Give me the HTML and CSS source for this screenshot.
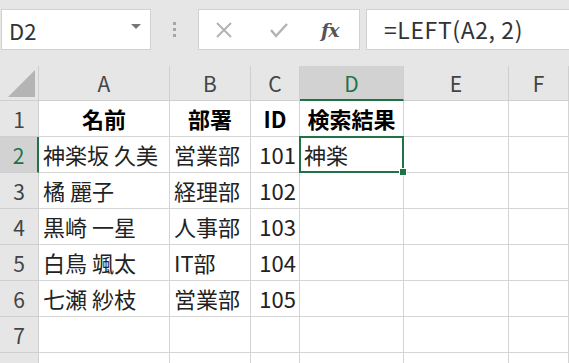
FILE: index.html
```html
<!DOCTYPE html>
<html lang="ja">
<head>
  <meta charset="UTF-8">
  <title>LEFT関数</title>
  <link rel="stylesheet" href="styles.css">
</head>
<body>
  <div class="toolbar">
    <div class="namebox">
      <span>D2</span>
      <span class="arrow"></span>
    </div>
    <div class="dots"><i></i><i></i><i></i></div>
    <div class="fbtns">
      <svg width="18" height="18" viewBox="0 0 18 18"><path d="M2 2 L16 16 M16 2 L2 16" stroke="#b3b3b3" stroke-width="2" fill="none"/></svg>
      <svg width="20" height="18" viewBox="0 0 20 18"><path d="M2 9 L7 15 L18 3" stroke="#b3b3b3" stroke-width="2.4" fill="none"/></svg>
      <span class="fx">fx</span>
    </div>
    <div class="formula">=LEFT(A2, 2)</div>
  </div>

  <div class="sheet">
    <div class="corner"><span class="tri"></span></div>
    <div class="hd">A</div>
    <div class="hd">B</div>
    <div class="hd">C</div>
    <div class="hd sel">D</div>
    <div class="hd">E</div>
    <div class="hd">F</div>

    <div class="rh">1</div>
    <div class="c b ctr">名前</div>
    <div class="c b ctr">部署</div>
    <div class="c b ctr">ID</div>
    <div class="c b ctr">検索結果</div>
    <div class="c"></div>
    <div class="c"></div>

    <div class="rh sel">2</div>
    <div class="c">神楽坂 久美</div>
    <div class="c">営業部</div>
    <div class="c num">101</div>
    <div class="c active">神楽</div>
    <div class="c"></div>
    <div class="c"></div>

    <div class="rh">3</div>
    <div class="c">橘 麗子</div>
    <div class="c">経理部</div>
    <div class="c num">102</div>
    <div class="c"></div>
    <div class="c"></div>
    <div class="c"></div>

    <div class="rh">4</div>
    <div class="c">黒崎 一星</div>
    <div class="c">人事部</div>
    <div class="c num">103</div>
    <div class="c"></div>
    <div class="c"></div>
    <div class="c"></div>

    <div class="rh">5</div>
    <div class="c">白鳥 颯太</div>
    <div class="c">IT部</div>
    <div class="c num">104</div>
    <div class="c"></div>
    <div class="c"></div>
    <div class="c"></div>

    <div class="rh">6</div>
    <div class="c">七瀬 紗枝</div>
    <div class="c">営業部</div>
    <div class="c num">105</div>
    <div class="c"></div>
    <div class="c"></div>
    <div class="c"></div>

    <div class="rh">7</div>
    <div class="c"></div>
    <div class="c"></div>
    <div class="c"></div>
    <div class="c"></div>
    <div class="c"></div>
    <div class="c"></div>

    <div class="rh"></div>
    <div class="c"></div>
    <div class="c"></div>
    <div class="c"></div>
    <div class="c"></div>
    <div class="c"></div>
    <div class="c"></div>
  </div>
</body>
</html>
```

FILE: styles.css
```css
body {
  margin: 0;
  padding: 0;
  background-color: #e6e6e6;
  font-family: "Noto Sans CJK JP", "Noto Sans", sans-serif;
  color: #222;
  overflow: hidden;
}
.toolbar {
  height: 66px;
  display: flex;
  align-items: flex-start;
  padding-top: 9px;
  box-sizing: border-box;
}
.namebox {
  width: 150px;
  height: 41px;
  margin-left: 1px;
  background-color: white;
  border: 1px solid #d2d2d2;
  box-sizing: border-box;
  display: flex;
  align-items: center;
  justify-content: space-between;
  padding: 0 9px 0 7px;
  font-size: 22px;
  color: #333;
}
.arrow {
  width: 0;
  height: 0;
  border-left: 5px solid transparent;
  border-right: 5px solid transparent;
  border-top: 5px solid #777;
  margin-top: -6px;
}
.dots {
  width: 47px;
  height: 41px;
  display: flex;
  flex-direction: column;
  align-items: center;
  justify-content: center;
  gap: 3px;
}
.dots i {
  width: 3px;
  height: 3px;
  background-color: #a6a6a6;
}
.fbtns {
  width: 162px;
  height: 41px;
  background-color: white;
  border: 1px solid #d2d2d2;
  box-sizing: border-box;
  display: flex;
  align-items: center;
  gap: 36px;
  padding-left: 16px;
}
.fx {
  font-family: "DejaVu Serif", "Liberation Serif", serif;
  font-style: italic;
  font-weight: bold;
  font-size: 19px;
  color: #555;
  letter-spacing: -1px;
  margin-left: -4px;
}
.formula {
  flex: 1;
  height: 41px;
  margin-left: 6px;
  background-color: white;
  border: 1px solid #d2d2d2;
  border-right: none;
  box-sizing: border-box;
  font-size: 23px;
  letter-spacing: 0.6px;
  line-height: 38px;
  padding-left: 17px;
  color: #333;
  white-space: nowrap;
}
.sheet {
  display: grid;
  grid-template-columns: 39px 131px 81px 49px 104px 105px 1fr;
  grid-template-rows: 35px repeat(8, 36px);
  background-color: white;
}
.corner, .hd, .rh {
  background-color: #e6e6e6;
  border-right: 1px solid #cfcfcf;
  border-bottom: 1px solid #cfcfcf;
  box-sizing: border-box;
  display: flex;
  align-items: center;
  justify-content: center;
  font-size: 21px;
  color: #444;
}
.corner {
  align-items: flex-end;
  justify-content: flex-end;
  padding: 0 3px 3px 0;
}
.tri {
  width: 0;
  height: 0;
  border-left: 27px solid transparent;
  border-bottom: 27px solid #b4b4b4;
}
.hd.sel {
  background-color: #d2d2d2;
  border-bottom: 2px solid #217346;
  color: #217346;
}
.rh.sel {
  background-color: #d2d2d2;
  border-right: 2px solid #217346;
  color: #217346;
}
.c {
  border-right: 1px solid #d4d4d4;
  border-bottom: 1px solid #d4d4d4;
  box-sizing: border-box;
  font-size: 22px;
  line-height: 35px;
  padding: 0 4px;
  white-space: nowrap;
  overflow: visible;
  color: #222;
}
.b {
  font-weight: bold;
  color: #000;
}
.ctr {
  text-align: center;
  padding: 0;
}
.num {
  text-align: right;
  padding-right: 3px;
  padding-left: 0;
}
.active {
  position: relative;
}
.active::before {
  content: "";
  position: absolute;
  left: -1px;
  top: -1px;
  right: -1px;
  bottom: -1px;
  border: 2px solid #217346;
}
.active::after {
  content: "";
  position: absolute;
  right: -4px;
  bottom: -4px;
  width: 6px;
  height: 6px;
  background-color: #217346;
  border: 1px solid white;
}
```
